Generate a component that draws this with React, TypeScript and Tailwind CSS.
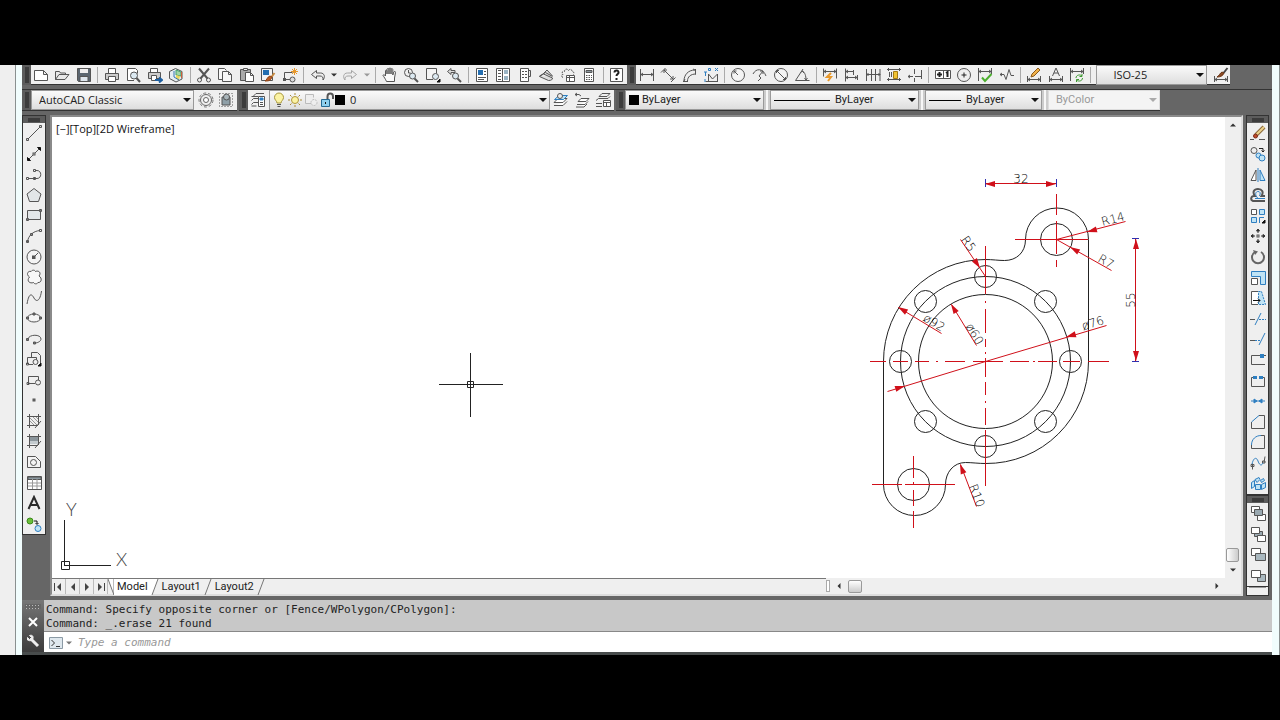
import { ReactNode } from "react";
import clsx from "clsx";

const BLUE = "#2f7fc1";
const PALE = "#bfe3f5";
const RED = "#d0101a";

// every glyph is drawn on a 16x16 grid
const icons: Record<string, ReactNode> = {
    // standard toolbar
    new: <path d="M1.5 3.5h9l4 4v6h-13zM10.5 3.5v4h4" fill="#fff" />,
    open: <path d="M1.5 12.500v-8h4l1 1.500h5v2M1.500 12.500l3.500-5h10l-4 5z" fill="#e8e8e8" />,
    save: <><path d="M1.500 1.500h13v13h-12l-1-1z" fill="#5b6670" /><path d="M4 2h8v4H4z" fill="#eee" stroke="none" /><path d="M4 9.500h8v5H4z" fill="#dfe7ee" /></>,
    print: <><path d="M4.500 6.500v-5h7v5" fill="#fff" /><path d="M1.500 6.500h13v6h-13z" fill="#ccc" /><path d="M4.500 9.500h7v5h-7z" fill="#fff" /></>,
    preview: <><path d="M9 13.500H2.500v-12h8l2 2v3" fill="#fff" /><circle cx="9" cy="8.500" r="3.500" fill="#dce9f1" /><path d="M11.500 11l3.500 4" strokeWidth="2" /></>,
    publish: <><path d="M3.500 5.500v-4h7v4" fill="#fff" /><path d="M1.500 5.500h12v6h-12z" fill="#ccc" /><path d="M4.500 8.500h5v5h-5z" fill="#fff" /><path d="M8 13h6M12 10.500l3 2.500-3 2.500" stroke="#1d5fa0" strokeWidth="2" /></>,
    dwf: <><path d="M1.500 4.500l6-3 6.500 3v7.500l-6 3-6.500-3.500z" fill="#e5edf0" /><path d="M8 3l5 2v4l-5-1z" fill="#9fd6a5" stroke="#45a070" /><path d="M8 8l4 1-1 4-3-1z" fill="#e9d65a" stroke="none" /><path d="M13.500 5v6" stroke="#d0603a" /><path d="M6 4v6l5 3" stroke="#3577b5" /></>,
    cut: <><path d="M3 1.500l8.500 10M13 1.500L4.500 11.500" strokeWidth="2" /><circle cx="3.500" cy="13" r="2" /><circle cx="12.500" cy="13" r="2" /></>,
    copy: <path d="M5 12.500H1.500v-11h6l2 2M5.500 4.500h6l3 3v7h-9zM11.500 4.500v3h3" fill="#f7f7f7" />,
    paste: <><path d="M1.500 2.500h10v11h-10z" fill="#aaa" /><path d="M4.500 1.500h4v2h-4z" fill="#eee" /><path d="M6.500 5.500h5l3 3v6h-8zM11.500 5.500v3h3" fill="#fff" /></>,
    match: <><path d="M1.500 1.500h11v12h-11z" fill="#f4f4f4" /><path d="M3 3h6v5H3z" fill="#246eb0" stroke="none" /><path d="M14.500 6l-3 4" stroke="#c78b42" strokeWidth="2" /><path d="M12 10c-1 4-4 4-7 4 2-1 2-4 5-5z" fill="#b85c26" stroke="#8c4215" /></>,
    block: <><path d="M10.500 5.500h-8v7h6" /><rect x="1.500" y="11.500" width="2" height="2" fill="#555" /><circle cx="10.500" cy="12.500" r="2.500" fill="#ddd" /><path d="M12.500 1v7M9 4.500h7M10 2l5 5M15 2l-5 5" stroke="#e8982a" /></>,
    undo: <path d="M1.500 7.500l5-4v2.500h4c4 0 5 4 2.500 7 .5-3-1-4-3-4H6.500v2.500z" fill="#eee" />,
    redo: <path d="M14.500 7.500l-5-4v2.500h-4c-4 0-5 4-2.500 7-.5-3 1-4 3-4h3.500v2.500z" fill="#eee" stroke="#a5a5a5" />,
    pan: <path d="M4.500 14.500C3.500 12 2 10 1 8.500c0-1 1.500-1 2.500.5V4c0-1.300 1.500-1.300 1.500 0v3V2.500c0-1.300 2-1.300 2 0V7V2c0-1.300 2-1.300 2 0v5-4.500c0-1.200 1.800-1.200 1.800 0V8l1-3c.7-1 2-.5 1.700.5L12.500 11v3.500z" fill="#fafafa" />,
    zoomrt: <><circle cx="5.500" cy="5.500" r="4" /><path d="M5.500 3v3h2" /><circle cx="9.500" cy="9" r="3" fill="#dce9f1" /><path d="M11.500 11.500l3.500 3.500" strokeWidth="2" /></>,
    zoomwin: <><path d="M8 12.500H1.500v-11h10v5" fill="#f4f4f4" /><circle cx="10.500" cy="9.500" r="3" fill="#dce9f1" /><path d="M15 12v3h-3z" fill="#111" stroke="#111" /></>,
    zoomprev: <><path d="M1.500 4.500L5 1.500v2h4v2H5v2z" fill="#ddd" /><circle cx="9.500" cy="9" r="3" fill="#dce9f1" /><path d="M11.500 11.500l3.500 3.500" strokeWidth="2" /></>,
    props: <><path d="M2.500 1.500h11v13h-11z" fill="#fff" /><path d="M4 3h5v5H4z" fill="#246eb0" stroke="none" /><path d="M10 4.500h2M10 7.500h2M4 10.500h8M4 12.500h6" /></>,
    dcenter: <><path d="M1.500 1.500h13v13h-13z" fill="#fff" /><path d="M3 3.500h3M3 6.500h3M3 9.500h3M3 12.500h3M7.500 2v12" /><path d="M9 3h4v4H9zM9 9h4v4H9z" fill="#9ab4c4" stroke="none" /></>,
    palettes: <><path d="M3.500 1.500h8v13h-8z" fill="#fff" /><path d="M11.500 3.500h2v6h-2M5 4.500h2M8 4.500h2M5 7.500h2M8 7.500h2M5 10.500h2M8 10.500h2" /></>,
    sheets: <path d="M1.500 9.500l9 4c3 0 4-1 4-2.500l-9-4zM1.500 9l6-3.500 7 4M5 7l4-4 5.500 6" fill="#ddd" />,
    markup: <><path d="M3 10.500c-2-1-2-3 0-3-2-2 0-4 1.500-3 0-3 3-3 4-1 1-2 4-1 3.500 1 2 0 2.500 2 1.500 3" strokeDasharray="2 1" /><path d="M6.500 8.500h8v6h-8zM6.500 10.500h8M9.500 8.500v6" fill="#fff" /></>,
    calc: <><path d="M3.500 1.500h9v13h-9z" fill="#fff" /><path d="M5 3.500h6v2H5z" fill="#8b98a0" /><path d="M5 8.500h1.500M7.500 8.500H9M10 8.500h1M5 10.500h1.500M7.500 10.500H9M10 10.500h1M5 12.500h1.500M7.500 12.500H9M10 12.500h1" /></>,
    help: <><path d="M1.500 1.500h12v13h-12z" fill="#fff" /><path d="M5.500 5.500c0-3 4.500-2.500 4 .3-.2 1.200-2 1.400-2 3.200M7.500 11v2" stroke="#222" strokeWidth="2" /></>,
    // dimension toolbar
    linear: <path d="M1.500 2v12M14.500 2v12M2 7.500h12M4 6l-2 1.500L4 9M12 6l2 1.500L12 9" />,
    aligned: <path d="M1 5.500L5.500 1M11 15l4.500-4.500M4 3l9 9M4 6V3h3M13 9v3h-3" />,
    arclen: <path d="M2 14c0-6 4-11 11-11M5.500 14c0-4 3-7 8.500-7M1 14.500h5M13.500 2v5.500M3 12l-1 2M11 2l2 1" />,
    ordinate: <><path d="M2.500 14.500h12M5.500 12V7l4 5 5-5v8M5.500 14v-3" /><path d="M1 5h3M2.500 5v4M5.500 1.500h2v2h-2zM12 1l3 3M15 1l-3 3M2 12v3" stroke={BLUE} /></>,
    radius: <><circle cx="8" cy="8" r="6.500" fill="#f4f4f4" /><path d="M8 8L4 4M4 6.500V4h2.500" /></>,
    jogged: <path d="M1 7c3-6 10-6 13 2M6 14l3-3-2-2 4-5M11 7V4H8" />,
    diameter: <><circle cx="8" cy="8" r="6.500" fill="#f4f4f4" /><path d="M3.500 3.500l9 9M3.500 6V3.500H6M10 12.500h2.500V10" /></>,
    angular: <path d="M1.500 13.500h14M1.500 13.500L9 2M8 4c3 1 4 5 4 9M6.500 5.500L8.500 4l1.500 2M10.500 11l1.500 2 1.500-2" />,
    quick: <><path d="M1.500 1.500v8M14.500 1.500v10M2 4.500h12M4 3L2 4.500 4 6M12 3l2 1.500L12 6" /><path d="M9 6l-4 4h4l-3 4" stroke="#e8982a" strokeWidth="2" /></>,
    baseline: <path d="M2.500 1.500v13M3 4.500h7M10.500 3v5M3 10.500h11M14.500 8v5M5 3L3 4.500 5 6M5 9l-2 1.500L5 12M12 9l2 1.500-2 1.500" />,
    continue: <path d="M1.500 2v12M6.500 2v12M10.500 2v12M15 2v12M2 7.500h13M3.500 6L2 7.500 3.500 9M13.500 6L15 7.500 13.500 9" />,
    space: <><path d="M1 2.500h14M1 12.500h14M2.500 1v3M13.500 1v3M2.500 11v3M13.500 11v3M3.500 5v5M5.500 5v5" /><path d="M7.500 4.500h4v7h-4z" fill="#f1c232" stroke="#a47b12" /></>,
    dimbreak: <path d="M1 9.500h5M8 9.500h6M7.500 2v5M7.500 11v4M14.500 3v9M3 8l-2 1.500L3 11" />,
    tolerance: <><path d="M.5 3.500h15v8H.500zM8.500 3.500v8" fill="#fff" /><path d="M2 7.500h5M4.500 5v5M11 6l1.500-1v5" strokeWidth="2" stroke="#222" /></>,
    center: <><circle cx="8" cy="8" r="6.500" /><path d="M8 5.500v5M5.500 8h5" stroke="#222" /></>,
    inspect: <><path d="M1.500 1v13M14.500 1v6M2 4.500h12M4 3L2 4.500 4 6M12 3l2 1.500L12 6" /><path d="M5 10.500l3 3.500 6.500-7" stroke="#4caf2e" strokeWidth="2" /></>,
    jogline: <path d="M1 7.500h4l2 5 3-10 2 6h3M3 6L1 7.500 3 9" />,
    dimedit: <><path d="M1.500 9v6M14.500 9v6M2 12.500h12M4 11l-2 1.500L4 14M12 11l2 1.500-2 1.500" /><path d="M5 10l1-3 6-6 2 2-6 6z" fill="#f1b24b" stroke="#8b5a1c" /></>,
    textedit: <path d="M1.500 9v6M14.500 9v6M2 12.500h12M4 11l-2 1.500L4 14M12 11l2 1.500-2 1.500M4.500 9l3.500-8 3.500 8M6 6h4" />,
    update: <><path d="M1.500 1v13M14.500 1v6M2 4.500h12M4 3L2 4.500 4 6M12 3l2 1.500L12 6" /><path d="M7 11c0-3 4-4 6-2M13 7v2.500h-2.500M13.500 11c0 3-4 4-6 2M7.500 15v-2.500H10" stroke="#3d9930" /></>,
    dimstyle: <><path d="M1.500 9v6M14.500 9v6M2 12.500h12M4 11l-2 1.500L4 14M12 11l2 1.500-2 1.500" /><path d="M14.500 1l-4 5" stroke="#444" strokeWidth="2" /><path d="M11 6c-1 3-4 4-7 4 2-1 3-4 5-5z" fill="#8c4a25" stroke="#6a3415" /></>,
    // workspace + layers
    gear: <><circle cx="8" cy="8" r="7" stroke="#777" strokeDasharray="3 2" /><circle cx="8" cy="8" r="5.500" stroke="#666" fill="#eee" /><circle cx="8" cy="8" r="2.500" stroke="#666" fill="#fff" /></>,
    workspace: <><path d="M4 5h8v8H4z" fill="#8fa0a8" /><circle cx="8.500" cy="5" r="3" fill="#a9b5ba" /><path d="M1.500 1.500h13v13h-13z" strokeDasharray="1 2" /></>,
    layerprops: <><path d="M3 4.500l3-3h8M1.500 8.500l2-2H9M1.500 12.500l2-2H8M1.500 4.500H8M1.500 14h5" /><path d="M8.500 4.500h6v10h-6z" fill="#fff" /><path d="M10 6h3v2h-3z" fill={BLUE} stroke={BLUE} /><path d="M10 10.500h3M10 12.500h3" /></>,
    bulb: <><path d="M6 11c0-2-2.500-3-2.500-5.500a4.500 4.500 0 0 1 9 0C12.500 8 10 9 10 11z" fill="#fbf3a4" stroke="#a7963c" /><path d="M6 12.500h4M6.500 14.500h3" /></>,
    sun: <><circle cx="8" cy="8" r="3.500" fill="#fbf3a4" stroke="#b1963a" /><path d="M8 1v2M8 13v2M1 8h2M13 8h2M3 3l1.500 1.500M11.500 11.500L13 13M13 3l-1.500 1.500M4.500 11.500L3 13" stroke="#a98b35" /></>,
    vpfreeze: <g stroke="#bbb"><path d="M9 11.500H2.500v-9h8v3" fill="#eee" /><circle cx="11" cy="10.500" r="3" fill="#eee" strokeDasharray="2 1" /></g>,
    unlock: <><path d="M2.500 7.500h8v7h-8z" fill="#8fd0ee" stroke="#246a94" /><path d="M8.500 7V4.500c0-4 5.500-4 5.500 0V7" strokeWidth="2" /><path d="M6.500 10v2" stroke="#111" /></>,
    layercur: <><path d="M1 10.500h9l4-4H5zM1 13.500h9l4-4" fill="#fff" /><path d="M1.500 7.500h9l4-4H6z" fill={PALE} stroke={BLUE} /><circle cx="7" cy="4" r="2.500" fill="#eee" /></>,
    layerprev: <path d="M1 2.500h4M3 1L1 2.500 3 4M5 2.500l2 1.500M4 9.500h8l3-3H7zM3 12.500h8l3-3M2 15h8l3-3" fill="#fff" />,
    layerstate: <><path d="M4 4.500l3-3h8l-3 3zM1 8.500l2.500-2H13l2-2M1 11.500h6M1 14.500h6" /><path d="M8.500 8.500h7v6h-7zM8.500 10.500h7M11.500 10.500v4" fill="#fff" /></>,
    // draw palette
    line: <path d="M2 14L14 2M.5 13.500h2v2h-2zM13.500.5h2v2h-2z" fill="#ddd" />,
    xline: <><path d="M2 14L14 2" /><path d="M14.500 1.500v3l-3-3zM1.500 14.500v-3l3 3z" fill="#111" stroke="#111" /><rect x="7" y="7" width="2" height="2" fill="#ddd" /></>,
    pline: <path d="M2 12.500h9c5 0 5-8 0-8H9M.5 11.500h2v2h-2zM7.500 11.500h2v2h-2zM7.500 3.500h2v2h-2z" fill="none" />,
    polygon: <path d="M8 1.500l7 5.500-2.500 7.500h-9L1 7z" fill="#e2e6e8" />,
    rect: <path d="M1.500 3.500h13v9h-13zM.5 11.500h2v2h-2zM13.500 2.500h2v2h-2z" fill="#e2e6e8" />,
    arc: <path d="M1.500 14C2 8 7 3 14 2.500M.5 12.500h2v2h-2zM4.500 5.500h2v2h-2zM13.500 1.500h2v2h-2z" />,
    circle: <><circle cx="8" cy="8" r="7" fill="#f4f4f4" /><path d="M8 8l4-4" /><rect x="6.500" y="7" width="2.500" height="2.500" fill="#555" /></>,
    revcloud: <path d="M3.500 8C0 6 1.500 1.500 5 2.500c1.500-2 4-1.500 4.500 0C13 1 15.500 4 13 7c3.500 2 2.500 7-1 6.500-1 2-4 1.500-4.500 0C4 15 0 12 3.500 8z" fill="#f8f8f8" />,
    spline: <path d="M1 14C3 2 6 4 8 8s6 4 7.500-7" />,
    ellipse: <><ellipse cx="8" cy="8" rx="6.500" ry="4" fill="#f4f4f4" /><path d="M.5 7h2v2h-2zM13.500 7h2v2h-2zM7 3h2v2H7z" fill="#777" /></>,
    ellarc: <><path d="M2 8c1-5 13-5 13 0 0 2-3 4-6 4" /><path d="M.5 7.500h2v2h-2zM7.500 11h2v2h-2z" fill="#777" /></>,
    insert: <><path d="M5.500 6V1.500h6l3 3v9M1.500 13V6.500h9V12M.5 12h2v2h-2zM3 13.500h4" /><circle cx="9.500" cy="11" r="2.500" fill="#eee" /><path d="M15 12v3h-3z" fill="#111" stroke="#111" /></>,
    makeblock: <><path d="M2.500 11V4.500h10v4M2 11.500h7M1 10.500h2v2H1z" /><circle cx="12" cy="10.500" r="2.500" fill="#eee" /></>,
    point: <rect x="7" y="7" width="2" height="2" fill="#777" />,
    hatch: <><path d="M4 5l7 7M4 8l4 4M7 4l5 5M10 4l2 2" stroke="#999" /><path d="M1 3.500h14M1 12.500h11M3.500 1v14M12.500 1v11M15 8l-6 7" /></>,
    gradient: <><path d="M4 4h8v4H4z" fill="#8b959b" stroke="none" /><path d="M4 8h8v3H4z" fill="#c4cbcf" stroke="none" /><path d="M1 3.500h14M1 12.500h11M3.500 1v14M12.500 1v11M15 8l-6 7" /></>,
    region: <><path d="M1.500 2.500h8l5 5v6h-13z" fill="#f4f4f4" /><circle cx="7.500" cy="8.500" r="3" /></>,
    table: <><path d="M1.500 1.500h14v13h-14z" fill="#fff" /><path d="M2 2h13v2.500H2z" fill="#8b98a0" /><path d="M2 8h13M2 11h13M6.500 4v10M11 4v10" stroke="#999" /></>,
    mtext: <path d="M2.500 14L8 2l5.500 12M4.500 10h7" stroke="#2b2b2b" strokeWidth="2" />,
    addsel: <><circle cx="4" cy="5" r="3" fill="#6bbf3a" stroke="#3c8a1b" /><circle cx="12" cy="12.500" r="3" fill={PALE} stroke={BLUE} /><path d="M8 5h3v3M9.500 7L11 8.500 12.500 7" stroke="#111" /></>,
    // modify palette
    erase: <><path d="M0 14.500h4M9 14.500h6" /><path d="M6 10l8-8" stroke="#8b6a3a" strokeWidth="4" /><path d="M6 10l8-8" stroke="#ecd28c" strokeWidth="2" /><circle cx="5.500" cy="11" r="2" fill="#c04a2b" stroke="#7a2b18" /></>,
    copyobj: <><circle cx="4" cy="4.500" r="3" /><path d="M9 2.500h4v3M11.500 4.500L13 6l1.500-1.500" stroke="#222" /><circle cx="8.500" cy="9.500" r="2.500" fill={PALE} stroke={BLUE} /><circle cx="12" cy="12" r="3" fill={PALE} stroke={BLUE} /></>,
    mirror: <><path d="M6 3v10.500H1z" fill="#fff" /><path d="M10 3v10.500h5z" fill={PALE} stroke={BLUE} /><path d="M8 1v14" stroke={BLUE} /></>,
    offset: <><path d="M15 14H3c-3-1-2-5 1-5h1C2 5 4 2 8 2s6 3 3.500 7H15" strokeWidth="2" /><path d="M15 11.500H5h3C4 7 6 4.500 8 4.500S11 6 9.500 9" stroke={BLUE} /></>,
    array: <><path d="M1.500 1.500h5v5h-5z" fill="#fff" /><path d="M9.500 1.500h5v5h-5zM1.500 9.500h5v5h-5z" fill={PALE} stroke={BLUE} /><path d="M9.500 15V9.500H14" stroke={BLUE} /><path d="M15 12v3h-3z" fill="#111" stroke="#111" /></>,
    move: <><path d="M8 1v4M8 11v4M1 8h4M11 8h4M6.500 3L8 1l1.500 2zM6.500 13L8 15l1.500-2zM3 6.500L1 8l2 1.500zM13 6.500L15 8l-2 1.500z" fill="#333" stroke="#333" /><rect x="7" y="7" width="2" height="2" /></>,
    rotate: <><path d="M5 3a6 6 0 1 0 6 0" stroke="#666" strokeWidth="2" /><path d="M3 1l5 1.500L5 6z" fill="#666" stroke="none" /></>,
    scale: <><path d="M1.500 1.500h14v13h-5v-8h-9z" fill={PALE} stroke={BLUE} /><path d="M1.500 8.500h6v6h-6z" fill="#fff" /></>,
    stretch: <><path d="M8 1.500H1.500v13H8" fill="#fff" /><path d="M8.500 1.500h3l4 13h-7z" fill={PALE} stroke={BLUE} strokeDasharray="2 1" /><path d="M3 10.500h7M8 8.500l2 2-2 2" stroke="#111" /></>,
    trim: <><path d="M5 14L11 2" stroke={BLUE} /><path d="M0 8.500h5" /><path d="M9 8.500h7" stroke={BLUE} strokeDasharray="2 1" /></>,
    extend: <><path d="M0 9.500h5" /><path d="M5 9.500h5" stroke={BLUE} strokeDasharray="2 1" /><path d="M9 14l6-12" stroke={BLUE} /></>,
    breakpt: <><path d="M15 12.500H1.500v-9H10M13 3.500h3" /><path d="M10 2h4v4h-4z" fill={BLUE} stroke="none" /></>,
    breakobj: <><path d="M4 4.500H1.500v9h13v-9H12" /><path d="M3 3h4v3H3zM9 3h4v3H9z" fill={BLUE} stroke="none" /></>,
    join: <path d="M1 8h14M4 6l3 2-3 2zM12 6L9 8l3 2z" stroke={BLUE} fill={BLUE} />,
    chamfer: <><path d="M1.500 8v6.500h13v-13H9" fill="none" /><path d="M1.500 8L9 1.500" stroke={BLUE} /></>,
    fillet: <><path d="M1.500 11v3.500h13v-13H11" /><path d="M1.500 11C1.500 5 6 1.500 11 1.500" stroke={BLUE} /></>,
    blend: <><path d="M2.500 8.500v6M1 9.500h3v2H1zM15 1.500l-1 6M12.500 6h2.500v2h-2.500z" /><path d="M2 9c2-8 5-6 6-3s3 6 5 2" stroke={BLUE} /></>,
    explode: <path d="M1.500 6.500l3-2v6l-3 2zM5.500 8.500h5v5h-5zM11.500 8.500l4-2v5l-4 2zM5 3.500l4-2 1 2-3 3zM10.500 4.500l3-2 1 2-3 2z" fill={PALE} stroke={BLUE} />,
    // draw order palette
    front: <><path d="M1.500 1.500h8v6h-8zM7.500 9.500h8v6h-8z" fill="#fff" /><path d="M4.500 4.500h8v6h-8z" fill="#9aa9b1" /></>,
    back: <><path d="M4.500 5.500h8v5h-8z" fill="#9aa9b1" /><path d="M1.500 1.500h8v6h-8zM7.500 9.500h8v6h-8z" fill="#fff" /></>,
    above: <><path d="M1.500 1.500h9v7h-9z" fill="#fff" /><path d="M5.500 6.500h10v7h-10z" fill="#a9b8bf" /></>,
    under: <><path d="M7.500 6.500h8v7h-8z" fill="#a9b8bf" /><path d="M1.500 2.500h9v7h-9z" fill="#fff" /></>,
};

const standard = "new open save | print preview publish dwf | cut copy paste match block | undo v redo w | pan zoomrt zoomwin zoomprev | props dcenter palettes sheets markup calc | help".split(" ");
const dimension = "linear aligned arclen ordinate | radius jogged diameter angular | quick baseline continue space dimbreak | tolerance center inspect jogline | dimedit textedit update |".split(" ");
const draw = "line xline pline polygon rect arc circle revcloud spline ellipse ellarc insert makeblock point hatch gradient region table mtext addsel".split(" ");
const modify = "erase copyobj mirror offset array move rotate scale stretch trim extend breakpt breakobj join chamfer fillet blend explode".split(" ");
const order = "front back above under".split(" ");

function Icon({ name }: { name: string }) {
    return (
        <svg viewBox="0 0 16 16" className="size-4 shrink-0" fill="none" stroke="#555" strokeWidth="1">
            {icons[name]}
        </svg>
    );
}

function Tool({ name }: { name: string }) {
    return (
        <button aria-label={name} className="size-4 shrink-0">
            <Icon name={name} />
        </button>
    );
}

function Items({ list }: { list: string[] }) {
    return list.map((name, i) => {
        if (name === "|") return <span key={i} className="h-4 w-px shrink-0 bg-[#aaa]" />;
        if (name === "v" || name === "w") {
            return (
                <button key={i} aria-label="History" className="w-[6px]">
                    <Arrow dir="down" color={name === "v" ? "#333" : "#999"} small />
                </button>
            );
        }
        return <Tool key={i} name={name} />;
    });
}

function Arrow({ dir, color = "#111", small = false }: { dir: "up" | "down" | "left" | "right"; color?: string; small?: boolean }) {
    const d = { up: "M0 6l4-4 4 4z", down: "M0 2h8L4 6z", left: "M6 0v8L2 4z", right: "M2 0v8l4-4z" }[dir];
    return (
        <svg viewBox="0 0 8 8" className={clsx("shrink-0", small ? "size-[6px]" : "size-2")} fill={color}>
            <path d={d} />
        </svg>
    );
}

// dotted handle, vertical on toolbars and horizontal on palettes
function Grip({ wide = false }: { wide?: boolean }) {
    return (
        <div className={clsx("flex shrink-0 items-center justify-center bg-[#5c5c5c]", wide ? "h-[7px] w-full" : "h-5 w-[9px]")}>
            <div className={clsx("bg-[radial-gradient(#3c3c3c_1px,#777_1px)] bg-size-[2px_2px]", wide ? "h-1 w-3" : "h-4 w-1")} />
        </div>
    );
}

function Combo({ label, value, className, before, disabled }: { label: string; value: string; className: string; before?: ReactNode; disabled?: boolean }) {
    return (
        <div
            className={clsx(
                "flex h-5 shrink-0 items-center gap-[3px] border pr-[2px]",
                disabled ? "border-[#ddd] bg-[#f4f4f4] text-[#999]" : "border-[#999] bg-linear-to-b from-[#fafafa] to-[#dedede] text-[#222]",
                className
            )}
        >
            {before}
            <select aria-label={label} disabled={disabled} className="min-w-0 flex-1 appearance-none bg-transparent text-[11px] leading-4 opacity-100 outline-none">
                <option>{value}</option>
            </select>
            <Arrow dir="down" color={disabled ? "#aaa" : "#111"} />
        </div>
    );
}

function Splitter() {
    return <div className="h-5 w-[6px] shrink-0 border-x-2 border-[#ccc] bg-[#f7f7f7]" />;
}

function Palette({ list, className }: { list: string[]; className: string }) {
    return (
        <div className="flex flex-col border border-[#333]">
            <Grip wide />
            <div className={clsx("flex flex-col items-center justify-around bg-[#efefef]", className)}>
                <Items list={list} />
            </div>
        </div>
    );
}

function Head({ x, y, angle }: { x: number; y: number; angle: number }) {
    return <path d="M0 0L-10-3V3z" fill={RED} stroke="none" transform={`translate(${x} ${y}) rotate(${angle})`} />;
}

function Note({ x, y, angle = 0, children }: { x: number; y: number; angle?: number; children: string }) {
    return (
        <text transform={`translate(${x} ${y}) rotate(${angle})`} textAnchor="middle" fill="#000" stroke="none" fontSize="12" className="font-['DejaVu_Sans'] font-extralight">
            {children}
        </text>
    );
}

// centre lines as [x, y, length]
const acrossLines = [
    [870, 361, 16], [893, 361, 15], [915, 361, 14], [936, 361, 2], [945, 361, 20], [973, 361, 30],
    [1010, 361, 19], [1033, 361, 2], [1038, 361, 19], [1063, 361, 17], [1088, 361, 21],
    [1015, 239, 73], [872, 484, 30], [905, 484, 50], [985, 183, 71],
];
const downLines = [
    [985, 246, 48], [985, 301, 2], [985, 309, 24], [985, 339, 8], [985, 352, 2], [985, 358, 19],
    [985, 382, 13], [985, 401, 2], [985, 408, 17], [985, 430, 56],
    [1056, 194, 21], [1056, 221, 33], [1056, 260, 7],
    [913, 456, 22], [913, 482, 2], [913, 490, 16], [913, 511, 17], [1135, 239, 122],
];

function Flange() {
    const bolts = [[985, 276], [1045, 301], [1070, 361], [1045, 421], [985, 446], [925, 421], [900, 361], [925, 301]];
    return (
        <svg viewBox="860 160 300 380" className="absolute top-[43px] right-[65px] h-[380px] w-[300px]" fill="none" stroke="#222" strokeWidth="1">
            <g transform="translate(.5 .5)">
                <path d="M883 361A102 102 0 0 1 985 259C992 259 998 260 1004 260C1016 260 1025 252 1025 239A31 31 0 0 1 1088 239V361A102 102 0 0 1 985 463C978 463 971 462 965 462C953 462 945 472 945 484A31 31 0 0 1 883 484Z" />
                <circle cx="985" cy="361" r="85" />
                <circle cx="985" cy="361" r="67" />
                {bolts.map(([x, y]) => (
                    <circle key={`${x}-${y}`} cx={x} cy={y} r="11" />
                ))}
                <circle cx="1056" cy="239" r="16" />
                <circle cx="913" cy="484" r="16" />
                <path stroke={RED} d="M1056 239l69-18M1056 239l55 31M985 276l-25-37M898 307l43 26M951 304l25 41M887 391l98-30 121-36M960 464l16 42" />
            </g>
            <g fill={RED} stroke="none">
                {acrossLines.map(([x, y, n]) => (
                    <rect key={`${x}-${y}`} x={x} y={y} width={n} height="1" />
                ))}
                {downLines.map(([x, y, n]) => (
                    <rect key={`${x}-${y}`} x={x} y={y} width="1" height={n} />
                ))}
            </g>
            <g fill="#3030b0" stroke="none">
                <rect x="985" y="179" width="1" height="8" />
                <rect x="1056" y="179" width="1" height="8" />
                <rect x="1132" y="238" width="7" height="1" />
                <rect x="1132" y="361" width="7" height="1" />
            </g>
            <Head x={985} y={184} angle={180} />
            <Head x={1056} y={184} angle={0} />
            <Head x={1136} y={239} angle={-90} />
            <Head x={1136} y={361} angle={90} />
            <Head x={1087} y={232} angle={165} />
            <Head x={1070} y={247} angle={210} />
            <Head x={980} y={268} angle={56} />
            <Head x={898} y={307} angle={211} />
            <Head x={951} y={304} angle={239} />
            <Head x={1066} y={337} angle={164} />
            <Head x={905} y={386} angle={-17} />
            <Head x={960} y={464} angle={249} />
            <Note x={1021} y={183}>32</Note>
            <Note x={1135} y={300} angle={-90}>55</Note>
            <Note x={1114} y={223} angle={-15}>R14</Note>
            <Note x={1104} y={265} angle={30}>R7</Note>
            <Note x={965} y={246} angle={56}>R5</Note>
            <Note x={932} y={326} angle={31}>ø92</Note>
            <Note x={971} y={336} angle={59}>ø60</Note>
            <Note x={1094} y={327} angle={-17}>ø76</Note>
            <Note x={973} y={497} angle={69}>R10</Note>
        </svg>
    );
}

function Canvas() {
    return (
        <div className="relative min-h-0 flex-1 overflow-hidden bg-white">
            <p className="px-1 pt-1 text-[11px] leading-4 text-[#111]">[−][Top][2D Wireframe]</p>
            {/* crosshair cursor */}
            <svg viewBox="0 0 64 64" className="absolute top-[236px] left-[387px] size-16" fill="none" stroke="#222">
                <path d="M0 31.500h64M31.500 0v64M28.500 28.500h6v6h-6z" />
            </svg>
            {/* UCS icon */}
            <svg viewBox="0 -12 76 84" className="absolute bottom-[6px] left-[6px] h-[84px] w-[76px]" fill="none" stroke="#222">
                <path d="M6.500 20v46M6.500 65.500H53M3.500 61.500h8v8h-8z" />
                <g fill="#444" stroke="none" fontSize="18" className="font-['Lato'] font-light">
                    <text x="8" y="16">Y</text>
                    <text x="58" y="66">X</text>
                </g>
            </svg>
            <Flange />
        </div>
    );
}

function Tabs() {
    const nav = [["First", "left"], ["Previous", "left"], ["Next", "right"], ["Last", "right"]] as const;
    return (
        <div className="flex h-4 bg-[#efefef] font-['Roboto',sans-serif] text-[11px] leading-4 text-[#222]">
            <div className="flex flex-1 border-t border-[#777]">
                {nav.map(([label, dir]) => (
                    <button key={label} aria-label={label} className="flex w-[14px] items-center justify-center border-r border-[#bbb]">
                        {label === "First" && <span className="h-2 w-px bg-[#444]" />}
                        <Arrow dir={dir} color="#444" />
                        {label === "Last" && <span className="h-2 w-px bg-[#444]" />}
                    </button>
                ))}
                {["Model", "Layout1", "Layout2"].map((tab, i) => (
                    <div key={tab} className="flex">
                        {i === 0 && (
                            <svg viewBox="0 0 6 16" className="h-4 w-[6px]" fill="#fff" stroke="#777"><path d="M0 0l6 16V0" /></svg>
                        )}
                        <button className={clsx("h-4 px-[3px]", i === 0 && "bg-white")}>{tab}</button>
                        <svg viewBox="0 0 8 16" className="h-4 w-2" fill="none" stroke="#777">
                            {i === 0 && <path d="M0 0h7L1 16H0z" fill="#fff" stroke="none" />}
                            <path d="M7 0L1 16" />
                        </svg>
                    </div>
                ))}
            </div>
            <div className="flex w-[415px] items-center pr-4">
                <span className="h-3 w-1 border border-[#aaa] bg-white" />
                <button aria-label="Scroll left" className="flex w-[18px] justify-center"><Arrow dir="left" color="#333" small /></button>
                <div className="flex flex-1"><span className="h-[13px] w-[14px] rounded-xs border border-[#999] bg-linear-to-b from-white to-[#ccc]" /></div>
                <button aria-label="Scroll right" className="flex w-4 justify-center"><Arrow dir="right" color="#333" small /></button>
            </div>
        </div>
    );
}

export default function App() {
    return (
        <div className="flex h-screen flex-col overflow-hidden bg-black py-[65px] font-['Open_Sans',sans-serif]">
            <div className="flex min-h-0 flex-1 bg-[#efefef] pl-[15px]">
                <div className="flex min-w-0 flex-1 border-r border-l border-[#8a9090] bg-[#f1fdfd] pr-[7px] pl-[6px]">
                    <div className="flex min-w-0 flex-1 flex-col bg-[#666]">
                        {/* standard + dimension toolbars */}
                        <div className="flex h-6 shrink-0">
                            <div className="flex h-5 border-b border-[#333]">
                                <Grip />
                                <div className="flex w-[596px] items-center justify-between bg-[#efefef] pr-[2px] pl-[2px]">
                                    <Items list={standard} />
                                </div>
                            </div>
                            <div className="flex h-5 border-b border-[#333]">
                                <Grip />
                                <div className="flex w-[594px] items-center justify-between bg-[#efefef] pr-px pl-[3px]">
                                    <Items list={dimension} />
                                    <Combo label="Dimension style" value="ISO-25" className="w-[111px] pl-4" />
                                    <Tool name="dimstyle" />
                                </div>
                            </div>
                        </div>
                        {/* workspace, layer and property toolbars */}
                        <div className="flex h-[26px] shrink-0 border-t border-[#333]">
                            <div className="flex h-[21px] border-b border-[#333]">
                                <Grip />
                                <div className="flex w-[206px] items-center gap-1 bg-[#efefef]">
                                    <Combo label="Workspace" value="AutoCAD Classic" className="w-[163px] pl-[7px]" />
                                    <Tool name="gear" />
                                    <Tool name="workspace" />
                                </div>
                            </div>
                            <div className="ml-[2px] flex h-[21px] border-b border-[#333]">
                                <Grip />
                                <div className="flex w-[366px] items-center gap-[3px] bg-[#efefef] pr-[3px] pl-[2px]">
                                    <Tool name="layerprops" />
                                    <Combo
                                        label="Layer"
                                        value="0"
                                        className="flex-1 pl-px"
                                        before={
                                            <span className="mr-[2px] flex items-center">
                                                <Icon name="bulb" />
                                                <Icon name="sun" />
                                                <Icon name="vpfreeze" />
                                                <Icon name="unlock" />
                                                <span className="size-[10px] bg-black" />
                                            </span>
                                        }
                                    />
                                    <div className="flex gap-[5px]">
                                        <Tool name="layercur" />
                                        <Tool name="layerprev" />
                                        <Tool name="layerstate" />
                                    </div>
                                </div>
                            </div>
                            <div className="ml-[2px] flex h-[21px] border-b border-[#333] font-['Roboto',sans-serif]">
                                <Grip />
                                <Combo label="Color" value="ByLayer" className="w-[139px] pl-[3px]" before={<span className="size-[10px] bg-black" />} />
                                <Splitter />
                                <Combo label="Linetype" value="ByLayer" className="w-[149px] pl-[3px]" before={<span className="mr-[2px] h-px w-14 bg-black" />} />
                                <Splitter />
                                <Combo label="Lineweight" value="ByLayer" className="w-[117px] pl-[3px]" before={<span className="mr-[2px] h-px w-8 bg-black" />} />
                                <Splitter />
                                <Combo label="Plot style" value="ByColor" className="w-[112px] pl-[7px]" disabled />
                            </div>
                        </div>
                        {/* palettes around the drawing window */}
                        <div className="flex min-h-0 flex-1 justify-between">
                            <div className="w-[24px] shrink-0">
                                <Palette list={draw} className="h-[411px]" />
                            </div>
                            <div className="mr-[3px] ml-1 flex min-w-0 flex-1 flex-col border-2 border-[#8a8a8a] border-r-[#ddd] border-b-[#ddd]">
                                <div className="flex min-h-0 flex-1">
                                    <Canvas />
                                    <div className="flex w-4 shrink-0 flex-col items-center bg-[#efefef] pr-px">
                                        <button aria-label="Scroll up" className="flex h-4 items-center"><Arrow dir="up" color="#333" small /></button>
                                        <div className="flex flex-1 flex-col justify-end">
                                            <span className="h-[14px] w-[13px] rounded-xs border border-[#999] bg-linear-to-r from-white to-[#ccc]" />
                                        </div>
                                        <button aria-label="Scroll down" className="flex h-4 items-center"><Arrow dir="down" color="#333" small /></button>
                                    </div>
                                </div>
                                <Tabs />
                            </div>
                            <div className="mr-[3px] flex w-[23px] shrink-0 flex-col">
                                <Palette list={modify} className="h-[371px]" />
                                <Palette list={order} className="h-[83px]" />
                                <div className="flex-1 border-x border-b border-[#333] bg-[#efefef] px-[2px]">
                                    <div className="h-px bg-[#999]" />
                                </div>
                            </div>
                        </div>
                        {/* command line */}
                        <div className="mt-1 flex h-[52px] shrink-0 font-['DejaVu_Sans_Mono',monospace] text-[11px] text-[#222]">
                            <div className="flex w-[22px] flex-col items-center justify-between bg-linear-to-b from-[#777] to-[#3c3c3c] pt-1 pb-1">
                                <div className="h-[5px] w-4 bg-[radial-gradient(#bbb_1px,#666_1px)] bg-size-[3px_3px]" />
                                <button aria-label="Close">
                                    <svg viewBox="0 0 10 10" className="size-[10px]" stroke="#fff" strokeWidth="2"><path d="M1 1l8 8M9 1L1 9" /></svg>
                                </button>
                                <button aria-label="Customize">
                                    <svg viewBox="0 0 14 14" className="size-[14px]" fill="none" stroke="#eee" strokeWidth="3"><path d="M5 5l7 7" /><path d="M1.500 3.500l2 2 2-2-2-2c3-1 4 1 3.500 3S4 7.500 1.500 6z" strokeWidth="1" fill="#eee" /></svg>
                                </button>
                            </div>
                            <div className="flex flex-1 flex-col">
                                <div className="h-8 border-b border-[#888] bg-[#c8c8c8] pt-[3px] pl-[2px] leading-[14px] whitespace-pre">
                                    <p>Command: Specify opposite corner or [Fence/WPolygon/CPolygon]:</p>
                                    <p>Command: _.erase 21 found</p>
                                </div>
                                <div className="flex flex-1 items-center bg-white pt-[2px] pl-[5px]">
                                    <button aria-label="Recent commands" className="flex items-center gap-[3px]">
                                        <svg viewBox="0 0 14 12" className="h-3 w-[14px]" fill="none" stroke="#333"><path d="M.5.5h13v11H.500z" fill="#dfe8ee" stroke="#8b9aa5" /><path d="M2.500 3l3 3-3 3M7 9.500h4" /></svg>
                                        <Arrow dir="down" color="#777" small />
                                    </button>
                                    <input aria-label="Command" placeholder="Type a command" className="ml-[6px] flex-1 italic outline-none placeholder:text-[#999]" />
                                </div>
                            </div>
                        </div>
                        <div className="h-[3px] shrink-0 bg-[#484c4c]" />
                    </div>
                </div>
            </div>
        </div>
    );
}
